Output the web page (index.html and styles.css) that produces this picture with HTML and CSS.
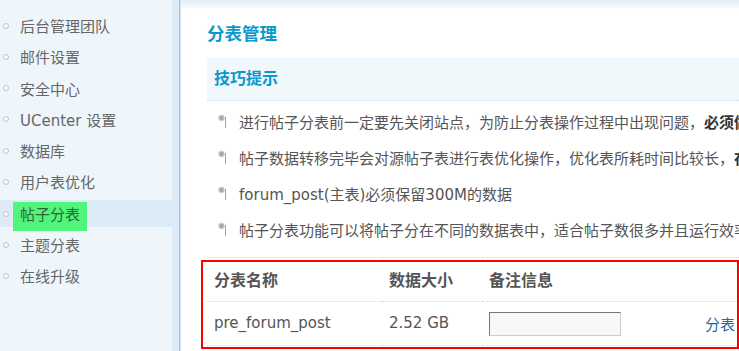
FILE: index.html
```html
<!DOCTYPE html>
<html lang="zh">
<head>
<meta charset="utf-8">
<title>分表管理</title>
<link rel="stylesheet" href="styles.css">
</head>
<body>
<div class="page">
  <aside class="side">
    <ul class="menu">
      <li><i class="dot"></i><span>后台管理团队</span></li>
      <li><i class="dot"></i><span>邮件设置</span></li>
      <li><i class="dot"></i><span>安全中心</span></li>
      <li><i class="dot"></i><span>UCenter 设置</span></li>
      <li><i class="dot"></i><span>数据库</span></li>
      <li><i class="dot"></i><span>用户表优化</span></li>
      <li class="on"><i class="dot"></i><span class="hl">帖子分表</span></li>
      <li><i class="dot"></i><span>主题分表</span></li>
      <li><i class="dot"></i><span>在线升级</span></li>
    </ul>
  </aside>
  <main class="main">
    <h3 class="title">分表管理</h3>
    <div class="tipbox">技巧提示</div>
    <ul class="tips">
      <li><svg class="tb" width="9" height="15" viewBox="0 0 9 15"><circle cx="3.5" cy="4" r="3.4" fill="#dcdcdc"/><circle cx="3.5" cy="4" r="2.4" fill="#a9a9a9"/><rect x="7" y="3" width="1" height="11" fill="#f0902a"/></svg><span>进行帖子分表前一定要先关闭站点，为防止分表操作过程中出现问题，<b>必须做好数据库备份</b></span></li>
      <li><svg class="tb" width="9" height="15" viewBox="0 0 9 15"><circle cx="3.5" cy="4" r="3.4" fill="#dcdcdc"/><circle cx="3.5" cy="4" r="2.4" fill="#a9a9a9"/><rect x="7" y="3" width="1" height="11" fill="#f0902a"/></svg><span>帖子数据转移完毕会对源帖子表进行表优化操作，优化表所耗时间比较长，<b>在此期间请勿操作</b></span></li>
      <li><svg class="tb" width="9" height="15" viewBox="0 0 9 15"><circle cx="3.5" cy="4" r="3.4" fill="#dcdcdc"/><circle cx="3.5" cy="4" r="2.4" fill="#a9a9a9"/><rect x="7" y="3" width="1" height="11" fill="#f0902a"/></svg><span>forum_post(主表)必须保留300M的数据</span></li>
      <li><svg class="tb" width="9" height="15" viewBox="0 0 9 15"><circle cx="3.5" cy="4" r="3.4" fill="#dcdcdc"/><circle cx="3.5" cy="4" r="2.4" fill="#a9a9a9"/><rect x="7" y="3" width="1" height="11" fill="#f0902a"/></svg><span>帖子分表功能可以将帖子分在不同的数据表中，适合帖子数很多并且运行效率</span></li>
    </ul>
    <div class="tblwrap">
      <table class="tbl">
        <colgroup><col class="c1"><col class="c2"><col class="c3"><col class="c4"></colgroup>
        <tr class="head"><th>分表名称</th><th>数据大小</th><th>备注信息</th><th></th></tr>
        <tr class="row"><td>pre_forum_post</td><td>2.52 GB</td><td><input class="memo" type="text"></td><td><a class="act" href="#">分表</a></td></tr>
      </table>
      <div class="mark"></div>
    </div>
  </main>
</div>
</body>
</html>
```
FILE: styles.css
```css
html, body {
  margin: 0;
  padding: 0;
}
body {
  width: 739px;
  height: 351px;
  overflow: hidden;
  font-family: "DejaVu Sans", "Noto Sans CJK SC", sans-serif;
  font-size: 15px;
  color: #666;
  background: #fff;
}
.page {
  display: flex;
  height: 351px;
}
.side {
  flex: 0 0 172px;
  background: #eff6fb;
  border-right: 7px solid #dcebf7;
}
.menu {
  list-style: none;
  margin: 0;
  padding: 12px 0 0;
}
.menu li {
  display: flex;
  align-items: center;
  height: 27px;
  margin-bottom: 4.3px;
  white-space: nowrap;
}
.menu li.on {
  background: #dcebf8;
  align-items: flex-start;
}
.dot {
  display: block;
  flex: 0 0 auto;
  width: 4px;
  height: 4px;
  margin-left: 2.5px;
  margin-right: 11.5px;
  border: 1px solid #c4c4c4;
  border-radius: 50%;
  background: radial-gradient(circle at 40% 40%, #fff 40%, #e4e4e4 100%);
}
.menu li.on .dot {
  margin-top: 11px;
  margin-right: 4.5px;
}
.hl {
  display: block;
  height: 29px;
  line-height: 27px;
  margin-top: 2px;
  padding: 0 7px;
  background: #52f47b;
  color: #2c6638;
}
.main {
  flex: 1 1 auto;
  min-width: 0;
  overflow: hidden;
  border-left: 1px solid #a4c3d9;
  box-shadow: inset 1px 0 0 #d3e4f0;
  background: linear-gradient(#e2edf7 0, #fff 10px);
  padding: 22px 0 0 27px;
}
.title {
  margin: 0;
  height: 24px;
  line-height: 24px;
  font-size: 17.5px;
  font-weight: bold;
  color: #0a99cc;
}
.tipbox {
  margin-top: 12px;
  height: 42px;
  line-height: 42px;
  padding-left: 7px;
  background: #f1f8fc;
  border-bottom: 1px dotted #cfe3f0;
  font-size: 16px;
  font-weight: bold;
  color: #0a99cc;
}
.tips {
  list-style: none;
  margin: 2px 0 0;
  padding: 0;
}
.tips li {
  display: flex;
  align-items: center;
  height: 36.2px;
  padding-left: 11px;
  white-space: nowrap;
  color: #555;
}
.tips b {
  color: #333;
}
.tb {
  flex: 0 0 auto;
  margin-right: 12px;
}
.tblwrap {
  position: relative;
  margin-top: 9px;
}
.tbl {
  width: 532px;
  border-collapse: collapse;
  table-layout: fixed;
}
.c1 { width: 175px; }
.c2 { width: 100px; }
.c3 { width: 216px; }
.c4 { width: 41px; }
.tbl th, .tbl td {
  padding: 0 0 0 7px;
  text-align: left;
  white-space: nowrap;
}
.tbl tr {
  border-top: 1px dotted #c6e0f1;
  border-bottom: 1px dotted #c6e0f1;
}
.head {
  height: 44px;
}
.head th {
  font-size: 16px;
  font-weight: bold;
  color: #555;
}
.row {
  height: 44px;
}
.row td {
  color: #555;
}
.memo {
  display: block;
  box-sizing: border-box;
  width: 132px;
  height: 24px;
  margin: 2px 0 0;
  padding: 0 4px;
  background: #f8f8f8;
  border: 1px solid;
  border-color: #777 #ccc #ccc #777;
  font: inherit;
}
.act {
  color: #2366a8;
  text-decoration: none;
}
.mark {
  position: absolute;
  top: 3px;
  left: -6px;
  right: 0;
  bottom: -3px;
  border: 2px solid #ff0000;
  pointer-events: none;
}
```
